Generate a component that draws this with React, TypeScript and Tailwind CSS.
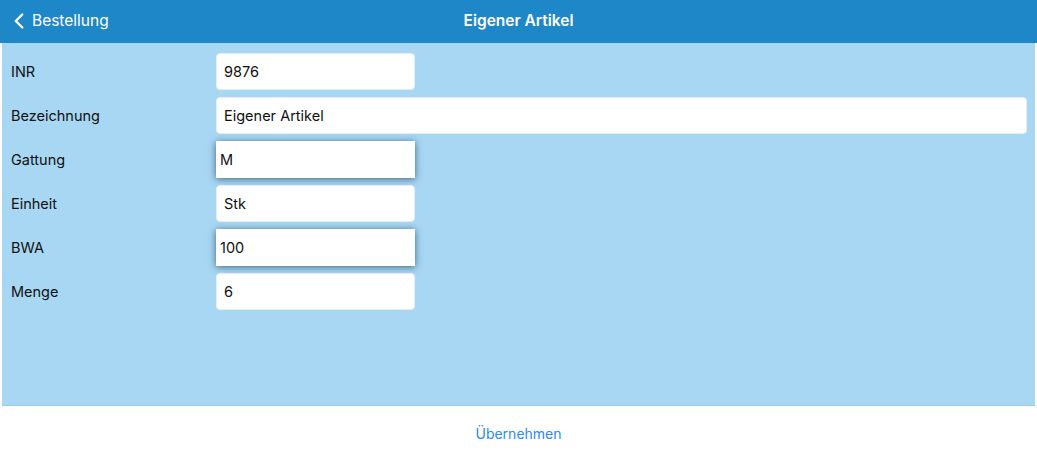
import { ChevronLeft } from "lucide-react";

const rows = [
  { label: "INR", value: "9876", wide: false, focus: false },
  { label: "Bezeichnung", value: "Eigener Artikel", wide: true, focus: false },
  { label: "Gattung", value: "M", wide: false, focus: true },
  { label: "Einheit", value: "Stk", wide: false, focus: false },
  { label: "BWA", value: "100", wide: false, focus: true },
  { label: "Menge", value: "6", wide: false, focus: false },
];

export default function App() {
  return (
    <div className="w-[1037px] h-[461px] flex flex-col bg-white font-['Inter','Liberation_Sans',sans-serif] text-[14.5px] text-[#111]">
      {/* header */}
      <div className="h-[43px] bg-[#1e87c8] relative flex items-center shrink-0">
        <div className="flex items-center pl-[6px] text-white text-[15.5px] -mt-[2px]">
          <ChevronLeft className="w-[26px] h-[26px]" strokeWidth={2.2} />
          <span>Bestellung</span>
        </div>
        <div className="absolute inset-0 flex items-center justify-center text-white font-semibold text-[15.5px] -mt-[2px] pointer-events-none">
          Eigener Artikel
        </div>
      </div>

      {/* form */}
      <div className="h-[363px] bg-[#a7d7f3] ml-[2px] mr-[2px] pt-[10px] border-b border-[#9ccbe8]">
        {rows.map((r) => (
          <div key={r.label} className="flex items-center h-[37px] mb-[7px]">
            <div className="w-[214px] pl-[9px]">{r.label}</div>
            <div
              className={
                "h-[37px] bg-white flex items-center " +
                (r.wide ? "w-[811px] " : "w-[199px] ") +
                (r.focus
                  ? "pl-[4px] shadow-[0_1px_7px_rgba(30,60,90,0.75)]"
                  : "pl-[7px] rounded-[4px] border border-[#e3eef5]")
              }
            >
              {r.value}
            </div>
          </div>
        ))}
      </div>

      {/* footer */}
      <div className="flex-1 flex items-center justify-center">
        <span className="text-[#2a8cee] text-[14px]">Übernehmen</span>
      </div>
    </div>
  );
}
